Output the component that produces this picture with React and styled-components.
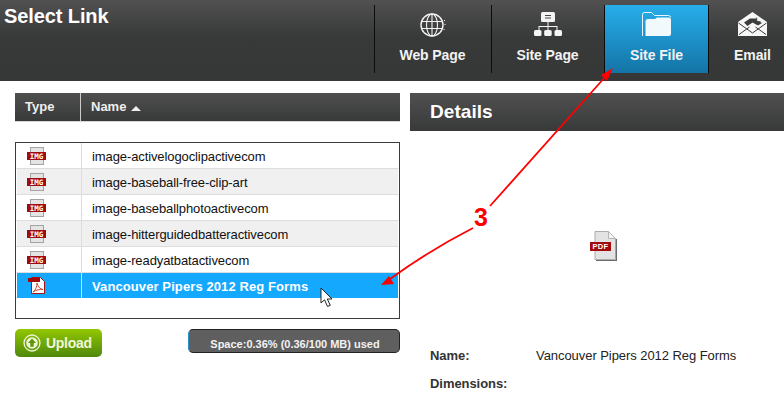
import React from 'react'
import styled, {createGlobalStyle} from 'styled-components'

const rows = [
	{name: 'image-activelogoclipactivecom', type: 'img'},
	{name: 'image-baseball-free-clip-art', type: 'img', shaded: true},
	{name: 'image-baseballphotoactivecom', type: 'img'},
	{name: 'image-hitterguidedbatteractivecom', type: 'img', shaded: true},
	{name: 'image-readyatbatactivecom', type: 'img'},
	{name: 'Vancouver Pipers 2012 Reg Forms', type: 'pdf', selected: true},
]

const GlobeIcon = () => (
	<svg width="26" height="26" viewBox="0 0 26 26" fill="none" stroke="#f2f2f2">
		<circle cx="12" cy="13" r="11" strokeWidth="1.4" />
		<ellipse cx="12" cy="13" rx="5.5" ry="11" strokeWidth="1.1" />
		<path d="M12 2v22M1.5 9.5h21M1.5 16.5h21" strokeWidth="1.1" />
		<path d="M24.5 8v1M25 12v1M24 17v1" strokeWidth="1" />
	</svg>
)

const NetworkIcon = () => (
	<svg width="28" height="24" viewBox="0 0 28 24" fill="#f4f4f4">
		<rect x="7" y="0" width="14" height="10" rx="1.5" />
		<path d="M11 3.5h6M11 6h6" stroke="#444" strokeWidth="1" />
		<path d="M13.5 10h1v4h9v4h-1v-3h-8v3h-1v-3h-8v3h-1v-4h9z" />
		<rect x="0" y="18" width="7.5" height="6" rx="1.5" />
		<rect x="10.2" y="18" width="7.5" height="6" rx="1.5" />
		<rect x="20.5" y="18" width="7.5" height="6" rx="1.5" />
	</svg>
)

const FolderIcon = () => (
	<svg width="29" height="24" viewBox="0 0 29 24" fill="none">
		<path d="M.5 24V2.5Q.5.5 2.5.5h7l3 3h14Q28.5 3.5 28.5 5.5" stroke="#e8f5fc" strokeWidth="1" />
		<path d="M3.500 24V9.500Q3.500 7 6 7h7l2-1.500h11.500Q29 5.500 29 8v14q0 2-2 2z" fill="#f2f9fd" />
	</svg>
)

const MailIcon = () => (
	<svg width="29" height="24" viewBox="0 0 29 24">
		<path d="M14.500 0 29 10v14H0V10z" fill="#f7f7f7" />
		<path d="M6 10.500l6-4h7l3 3.500 2 1-4 2.500-5.500-3-5 3.500z" fill="#3b3c3c" />
		<path d="M18.500 5.500l.5 4h3.500" fill="#f7f7f7" stroke="#3b3c3c" strokeWidth=".8" />
		<path d="M1 22.500 11.500 15M28 22.500 17.500 15M.5 11l14 10 14-10" fill="none" stroke="#3b3c3c" strokeWidth="1" />
	</svg>
)

const ImgIcon = () => (
	<svg width="19" height="18" viewBox="0 0 19 18">
		<rect x="3.500" y=".5" width="13" height="17" fill="#e4e4e4" stroke="#a3a3a3" />
		<rect x="0" y="5" width="19" height="8" fill="#a30a0a" />
		<text x="9.500" y="11.600" textAnchor="middle" fontFamily="'DejaVu Sans Mono', monospace" fontSize="7.500" fontWeight="700" fill="#fff">IMG</text>
	</svg>
)

const PdfRowIcon = () => (
	<svg width="17" height="17" viewBox="0 0 17 17">
		<path d="M3.500.5h9l4 4v12h-13z" fill="#fff" stroke="#a01414" />
		<rect x="0" y="1" width="12" height="4" fill="#a30a0a" />
		<path d="M5 15c3-2 4-6 4-9 1 4 3 6 6 6.500-3-.5-7 .5-10 2.500z" fill="none" stroke="#c0392b" strokeWidth=".9" />
	</svg>
)

const PdfPreview = () => (
	<svg width="27" height="31" viewBox="0 0 27 31">
		<path d="M5 .5h13.500L25.500 7.500V28.500H5z" fill="#e3e3e3" stroke="#adadad" />
		<path d="M18.500.5v7h7z" fill="#f5f5f5" stroke="#b5b5b5" />
		<path d="M26.500 8v21.500H6" fill="none" stroke="#6b6b6b" strokeWidth="1.200" />
		<rect x="0" y="11" width="21" height="9" fill="#a30a0a" />
		<text x="10.500" y="18.300" textAnchor="middle" fontFamily="'Liberation Sans', sans-serif" fontSize="7.500" fontWeight="700" fill="#fff" letterSpacing=".3">PDF</text>
	</svg>
)

const UploadIcon = () => (
	<svg width="18" height="18" viewBox="0 0 18 18">
		<circle cx="9" cy="9" r="8" fill="none" stroke="#eef6d8" strokeWidth="1.300" />
		<circle cx="9" cy="9" r="5.800" fill="#eef6d8" />
		<path d="M9 4.500 13 9h-2.300v3.800H7.300V9H5z" fill="#5f9407" />
	</svg>
)

const Cursor = () => (
	<svg width="14" height="21" viewBox="0 0 14 21">
		<path d="M1 1v15l3.500-3.200L7.500 19.500l2.800-1.200-3-6.300H12z" fill="#fff" stroke="#222" strokeWidth="1" />
	</svg>
)

const App = () => (
	<Page>
		<GlobalStyle />
		<TopBar>
			<Title>Select Link</Title>
			<Tabs>
				<Tab $width={117} $divider>
					<GlobeIcon />
					<TabLabel>Web Page</TabLabel>
				</Tab>
				<Tab $width={113} $divider>
					<NetworkIcon />
					<TabLabel>Site Page</TabLabel>
				</Tab>
				<Tab $width={105} $active>
					<FolderIcon />
					<TabLabel>Site File</TabLabel>
				</Tab>
				<Tab $width={87}>
					<MailIcon />
					<TabLabel>Email</TabLabel>
				</Tab>
			</Tabs>
		</TopBar>

		<Content>
			<LeftColumn>
				<TableHead>
					<TypeHead>Type</TypeHead>
					<NameHead>Name <SortArrow /></NameHead>
				</TableHead>

				<FileList>
					{rows.map((row) => (
						<FileRow key={row.name} $shaded={row.shaded} $selected={row.selected}>
							<TypeCell $pdf={row.type === 'pdf'}>{row.type === 'pdf' ? <PdfRowIcon /> : <ImgIcon />}</TypeCell>
							<NameCell $selected={row.selected}>{row.name}</NameCell>
						</FileRow>
					))}
				</FileList>

				<Actions>
					<UploadButton>
						<UploadIcon />
						Upload
					</UploadButton>
					<SpaceBar>Space:0.36% (0.36/100 MB) used</SpaceBar>
				</Actions>
			</LeftColumn>

			<DetailsColumn>
				<DetailsHead>Details</DetailsHead>
				<Preview>
					<PdfPreview />
				</Preview>
				<InfoRow>
					<InfoLabel>Name:</InfoLabel>
					<span>Vancouver Pipers 2012 Reg Forms</span>
				</InfoRow>
				<InfoRow>
					<InfoLabel>Dimensions:</InfoLabel>
				</InfoRow>
			</DetailsColumn>
		</Content>

		{/* Annotation drawn over the screenshot */}
		<Annotation width="784" height="408" viewBox="0 0 784 408">
			<path d="M490 206 L606 76" stroke="#f00" strokeWidth="1.800" fill="none" />
			<path d="M613 68 L601 75 L607 81z" fill="#f00" />
			<path d="M473 228 Q430 250 390 279" stroke="#f00" strokeWidth="1.800" fill="none" />
			<path d="M381 285 L394 284 L389 276z" fill="#f00" />
		</Annotation>
		<StepNumber>3</StepNumber>
		<CursorSpot><Cursor /></CursorSpot>
	</Page>
)

const GlobalStyle = createGlobalStyle`
	html, body {
		margin: 0;
		padding: 0;
		background: #fff;
	}
`

const Page = styled.div`
	position: relative;
	width: 784px;
	height: 408px;
	overflow: hidden;
	background: #fff;
	font-family: "Liberation Sans", Arial, sans-serif;
`

const TopBar = styled.div`
	display: flex;
	justify-content: space-between;
	height: 81px;
	background: linear-gradient(#515151, #383939 45%, #363737);
`

const Title = styled.h1`
	margin: 4px 0 0 4px;
	font-size: 20px;
	line-height: 24px;
	letter-spacing: -.1px;
	font-weight: 700;
	color: #fff;
`

const Tabs = styled.div`
	display: flex;
	flex-shrink: 0;
	height: 68px;
	margin: 5px -12px 0 0;
`

const Tab = styled.div`
	display: flex;
	flex-direction: column;
	align-items: center;
	justify-content: space-between;
	box-sizing: border-box;
	width: ${(props) => props.$width}px;
	height: 68px;
	padding: 7px 0 10px;
	border-left: 1px solid ${(props) => (props.$divider || props.$active ? '#0c0c0c' : 'transparent')};
	border-right: 1px solid ${(props) => (props.$active ? '#0c0c0c' : 'transparent')};
	background: ${(props) => (props.$active ? 'linear-gradient(#27aeeb, #1474a6)' : 'none')};
	& > svg {
		flex-shrink: 0;
	}
`

const TabLabel = styled.span`
	font-size: 14px;
	line-height: 16px;
	letter-spacing: -.1px;
	font-weight: 700;
	color: #f2f2f2;
`

const Content = styled.div`
	display: flex;
	gap: 10px;
	padding: 12px 0 0 15px;
`

const LeftColumn = styled.div`
	width: 385px;
	flex-shrink: 0;
`

const TableHead = styled.div`
	display: flex;
	height: 28px;
	border-bottom: 1px solid #d6d6d6;
	background: linear-gradient(#4f4f4f, #383939);
	color: #eee;
	font-size: 13px;
	font-weight: 700;
	line-height: 28px;
`

const TypeHead = styled.div`
	box-sizing: border-box;
	width: 66px;
	padding-left: 10px;
	border-right: 1px solid #ccc;
`

const NameHead = styled.div`
	padding-left: 10px;
`

const SortArrow = styled.span`
	display: inline-block;
	margin-left: 1px;
	vertical-align: 0;
	border-left: 5px solid transparent;
	border-right: 5px solid transparent;
	border-bottom: 5px solid #eee;
`

const FileList = styled.div`
	box-sizing: border-box;
	height: 177px;
	margin-top: 20px;
	border: 1px solid #3c3c3c;
`

const FileRow = styled.div`
	display: flex;
	box-sizing: border-box;
	height: ${(props) => (props.$selected ? '25px' : '26px')};
	border-bottom: ${(props) => (props.$selected ? 'none' : '1px solid #ddd')};
	border-left: 1px solid #fff;
	border-right: 1px solid #fff;
	background: ${(props) => (props.$selected ? '#14a8ff' : props.$shaded ? '#f0f0f0' : '#fff')};
`

const TypeCell = styled.div`
	display: flex;
	align-items: center;
	box-sizing: border-box;
	width: 65px;
	padding-left: ${(props) => (props.$pdf ? '11px' : '10px')};
	border-right: 1px solid #ddd;
`

const NameCell = styled.div`
	padding: 1px 0 0 10px;
	font-size: 13px;
	line-height: 26px;
	letter-spacing: ${(props) => (props.$selected ? '.1px' : '-.1px')};
	font-weight: ${(props) => (props.$selected ? 700 : 400)};
	color: ${(props) => (props.$selected ? '#fff' : '#111')};
`

const Actions = styled.div`
	display: flex;
	justify-content: space-between;
	align-items: flex-start;
	margin-top: 10px;
`

const UploadButton = styled.div`
	display: flex;
	align-items: center;
	gap: 5px;
	box-sizing: border-box;
	width: 87px;
	height: 28px;
	padding-left: 8px;
	border-radius: 5px;
	background: linear-gradient(#93c700, #4e880c);
	color: #f0f7dc;
	font-size: 14px;
	letter-spacing: -.3px;
	font-weight: 700;
`

const SpaceBar = styled.div`
	box-sizing: border-box;
	width: 212px;
	height: 24px;
	padding: 7px 0 0 2px;
	border: 1px solid #222;
	border-left-color: #2a8fc4;
	border-radius: 5px;
	background: #5f5f5f;
	color: #f2f2f2;
	font-size: 11px;
	line-height: 14px;
	font-weight: 700;
	text-align: center;
`

const DetailsColumn = styled.div`
	flex: 1;
	font-size: 13px;
	letter-spacing: -.06px;
	color: #222;
`

const DetailsHead = styled.div`
	height: 38px;
	padding-left: 20px;
	background: linear-gradient(#505050, #383939);
	color: #fff;
	font-size: 19px;
	letter-spacing: .05px;
	font-weight: 700;
	line-height: 38px;
`

const Preview = styled.div`
	display: flex;
	justify-content: center;
	height: 213px;
	padding: 100px 0 0 12px;
	box-sizing: border-box;
`

const InfoRow = styled.div`
	display: flex;
	height: 28px;
	padding-left: 20px;
	line-height: 23px;
`

const InfoLabel = styled.span`
	width: 106px;
	font-weight: 700;
	color: #333;
`

const Annotation = styled.svg`
	position: absolute;
	top: 0;
	left: 0;
	pointer-events: none;
`

const StepNumber = styled.span`
	position: absolute;
	left: 474px;
	top: 203px;
	color: #f00;
	font-size: 25px;
	line-height: 29px;
	font-weight: 700;
`

const CursorSpot = styled.div`
	position: absolute;
	left: 320px;
	top: 287px;
	line-height: 0;
`

export default App
